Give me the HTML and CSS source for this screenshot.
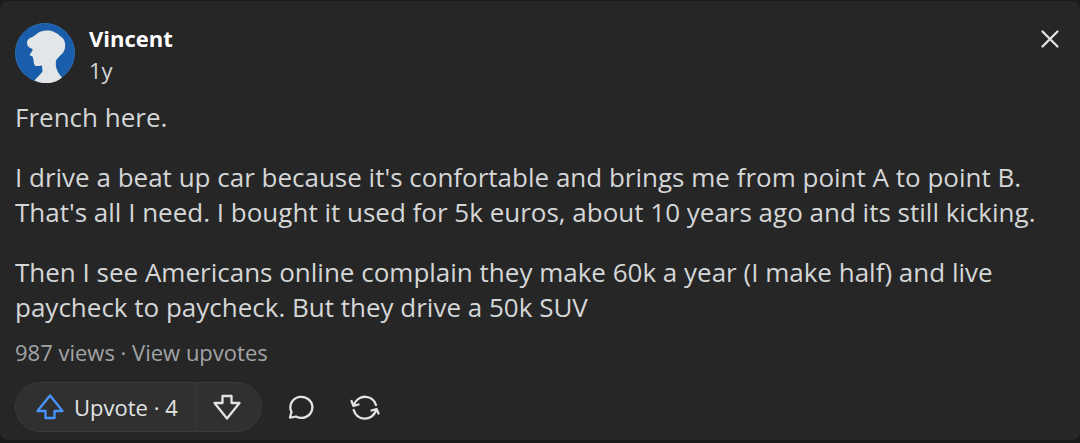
FILE: index.html
```html
<!DOCTYPE html>
<html lang="en">
<head>
    <meta charset="UTF-8">
    <meta name="viewport" content="width=device-width, initial-scale=1.0">
    <title>Vincent's post</title>
    <link rel="stylesheet" href="styles.css">
</head>
<body>
    <article class="card">
        <!-- Author -->
        <header class="post-header">
            <svg class="avatar" viewBox="0 0 60 60" aria-hidden="true">
                <circle cx="30" cy="30" r="29.5" fill="#1a5dab" stroke="#2b6cb8"/>
                <path fill="#e3e6e9" d="M19.5 57.5C22 54 26 51 27.500 48.500L27 42.500C24 43 21.500 43.500 20 42.500C18.500 41.500 19 37 17.500 33.500L14.500 32L17.500 27.500L17.500 26C13 25 11 21.500 12.500 17.500C14 14.500 18 14.500 21 11.500C25 7.500 34 6 40 9.500C43 10.500 44.500 13 47 14.500C50.500 17 51 24 49 28C47 32 42.500 34 41 38C40 45 43 50 47 54.500C40 61 28 62 19.500 57.500Z"/>
            </svg>
            <div class="author">
                <a class="name" href="#">Vincent</a>
                <span class="age">1y</span>
            </div>
            <button class="close" type="button" aria-label="Close">
                <svg width="24" height="24" viewBox="0 0 24 24">
                    <path d="M4.500 4.500L19.500 19.500M19.500 4.500L4.500 19.500"/>
                </svg>
            </button>
        </header>

        <!-- Text -->
        <div class="post-text">
            <p>French here.</p>
            <p>I drive a beat up car because it's confortable and brings me from point A to point B.<br>That's all I need. I bought it used for 5k euros, about 10 years ago and its still kicking.</p>
            <p>Then I see Americans online complain they make 60k a year (I make half) and live<br>paycheck to paycheck. But they drive a 50k SUV</p>
        </div>
        <div class="stats">987 views · <a href="#">View upvotes</a></div>

        <!-- Actions -->
        <div class="actions">
            <div class="votes">
                <button class="upvote" type="button">
                    <svg width="30" height="30" viewBox="0 0 30 30">
                        <path d="M15 3.500L27.500 19H19.500V26H10.500V19H2.500Z"/>
                    </svg>
                    <span>Upvote · 4</span>
                </button>
                <button class="downvote" type="button" aria-label="Downvote">
                    <svg width="30" height="30" viewBox="0 0 30 30">
                        <path d="M15 26.500L27.500 11H19.500V4H10.500V11H2.500Z"/>
                    </svg>
                </button>
            </div>
            <button class="icon-button" type="button" aria-label="Comments">
                <svg width="30" height="30" viewBox="0 0 30 30">
                    <path d="M4 25.500L5.500 20A11 10.500 0 1 1 10 24.500Q7 25.500 4 25.500Z"/>
                </svg>
            </button>
            <button class="icon-button" type="button" aria-label="Share">
                <svg width="30" height="30" viewBox="0 0 30 30">
                    <path d="M26 13A11.500 11.500 0 0 0 4.300 12M1.500 9L3.500 14L8.500 12.500M3.700 18A11.500 11.500 0 0 0 25.700 19M28.500 21.500L26.500 17L21.500 18.500"/>
                </svg>
            </button>
        </div>
    </article>
</body>
</html>
```
FILE: styles.css
```css
* {
    box-sizing: border-box;
}
body {
    margin: 0;
    padding: 1px 0 3px;
    min-height: 100vh;
    display: flex;
    background-color: #1a1a1a;
    color: #d5d6d7;
    font-family: "Open Sans", "Noto Sans", sans-serif;
}
.card {
    flex: 1;
    padding: 20px 15px 7px;
    border-radius: 8px;
    background-color: #262626;
}
.post-header {
    display: flex;
    align-items: flex-start;
}
.avatar {
    width: 60px;
    height: 60px;
    margin-top: 2px;
}
.author {
    display: flex;
    flex-direction: column;
    flex: 1;
    margin-left: 14px;
    font-size: 22px;
    line-height: 32px;
    padding-top: 1px;
}
.name {
    align-self: flex-start;
    color: #fff;
    font-weight: bold;
}
a {
    color: inherit;
    text-decoration: none;
}
a:hover {
    text-decoration: underline;
}
button {
    display: flex;
    align-items: center;
    padding: 0;
    border: none;
    background: none;
    color: #e2e3e3;
    font: inherit;
    cursor: pointer;
}
svg path {
    stroke-width: 2.3;
    stroke-linejoin: round;
    stroke-linecap: round;
}
button svg {
    fill: none;
    stroke: currentColor;
}
.close {
    margin: 6px 3px 0 0;
}
.post-text {
    margin-top: 14px;
    font-size: 26px;
    line-height: 35px;
}
.post-text p {
    margin: 0 0 25px;
}
.post-text p:last-child {
    margin-bottom: 0;
}
.stats {
    margin-top: 11px;
    color: #a2a4a6;
    font-size: 22px;
    line-height: 32px;
}
.actions {
    display: flex;
    align-items: center;
    gap: 34px;
    margin-top: 14px;
}
.votes {
    display: flex;
    height: 50px;
    margin-right: -10px;
    border: 1px solid #393939;
    border-radius: 25px;
    background-color: #303030;
    overflow: hidden;
}
.upvote {
    gap: 9px;
    padding: 0 18px 0 19px;
    border-right: 1px solid #393939;
    font-size: 22px;
}
.upvote svg {
    stroke: #4894fd;
}
.downvote {
    padding: 0 19px 0 15px;
}
```
